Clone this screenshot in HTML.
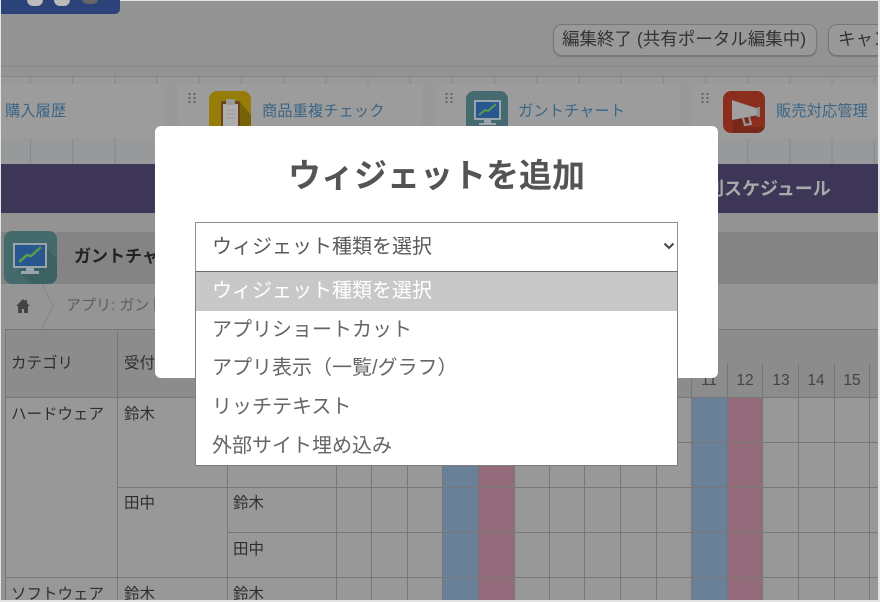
<!DOCTYPE html>
<html lang="ja"><head><meta charset="utf-8"><style>
html,body{margin:0;padding:0}
body{width:880px;height:602px;overflow:hidden;background:#e4e4e4;position:relative;font-family:"Liberation Sans","Noto Sans CJK JP",sans-serif}
div,span{position:absolute;box-sizing:border-box;white-space:nowrap}
#page{left:1px;top:1px;width:877px;height:599px;background:#939393;overflow:hidden}
#bl{filter:blur(.35px);left:0;top:0;width:880px;height:602px;overflow:hidden}
.card{top:84px;height:55px;background:#9c9c9c;border-radius:6px}
.lnk{top:103px;font-size:15.2px;line-height:18px;color:#3a6585;letter-spacing:.15px}
.ic{width:42px;height:42px;border-radius:8px;top:91px;overflow:hidden}
.v{width:1px;background:#777;top:329px;height:271px}
.h{height:1px;background:#777}
.t{font-size:15.5px;line-height:20px;color:#2e2e2e}
.d{font-size:15.5px;line-height:20px;color:#444;width:36px;text-align:center;top:371px}
.grip{width:10px;height:12px;top:92px;background:radial-gradient(circle,#666 1.1px,transparent 1.3px) 0 0/5px 4px}
.opt{left:0;width:481px;height:39px;font-size:20px;line-height:39px;padding-left:16px;color:#666}
</style></head><body>
<div id="page"></div>
<div id="bl">
<!-- header -->
<div style="left:1px;top:0;width:119px;height:14px;background:#2b4378;border-radius:0 0 5px 0;overflow:hidden">
<div style="left:26px;top:-6px;width:16px;height:12px;border-radius:8px;background:#bbb"></div>
<div style="left:53px;top:-6px;width:16px;height:12px;border-radius:8px;background:#bbb"></div>
<div style="left:81px;top:-6px;width:16px;height:10px;border-radius:6px;background:#666"></div>
</div>
<div style="left:1px;top:65px;width:877px;height:2px;background:#8d8d8d"></div>
<div style="left:553px;top:24px;width:264px;height:32px;border:1px solid #777;border-radius:9px;background:#999;font-size:17.5px;line-height:29px;color:#333;padding-left:8px;box-shadow:0 1px 1px #777">編集終了 (共有ポータル編集中)</div>
<div style="left:828px;top:24px;width:50px;height:32px;border:1px solid #777;border-right:none;border-radius:9px 0 0 9px;background:#999;font-size:17.5px;line-height:29px;color:#333;padding-left:9px;overflow:hidden;box-shadow:0 1px 1px #777">キャンセル</div>
<!-- grid background -->
<div style="left:1px;top:76px;width:877px;height:88px;background-color:#97999b;background-image:linear-gradient(90deg,#85898c 1px,transparent 1px);background-size:42.2px 100%;background-position:29px 0;border-top:1px solid #85888b"></div>
<div class="card" style="left:1px;width:164px"></div>
<div class="card" style="left:178px;width:244px"></div>
<div class="card" style="left:435px;width:244px"></div>
<div class="card" style="left:692px;width:186px;border-radius:6px 0 0 6px"></div>
<div class="lnk" style="left:5px">購入履歴</div>
<div class="lnk" style="left:262px">商品重複チェック</div>
<div class="lnk" style="left:518px">ガントチャート</div>
<div class="lnk" style="left:776px;width:98px;overflow:hidden">販売対応管理</div>
<div class="grip" style="left:187px"></div><div class="grip" style="left:444px"></div><div class="grip" style="left:700px"></div>
<div class="ic" style="left:209px;background:#967c08">
<svg width="42" height="42" style="position:absolute;left:0;top:0"><path d="M30 10L42 24V42H14z" fill="#776208"/><rect x="12" y="10" width="19" height="26" rx="2" fill="#6f431a"/><rect x="14" y="13" width="15" height="22" fill="#aeaeae"/><rect x="17" y="8" width="9" height="6" rx="1" fill="#999"/><path d="M17 19h9M17 23h9M17 27h9" stroke="#999"/></svg></div>
<div class="ic" style="left:466px;background:#456a70">
<svg width="42" height="42" style="position:absolute;left:0;top:0"><rect x="8" y="9" width="27" height="20" fill="#9aa5ab"/><rect x="10" y="11" width="23" height="16" fill="#28578f"/><path d="M13 24l6-5 3 1 8-7" stroke="#5d9b4a" stroke-width="2" fill="none"/><rect x="18" y="29" width="7" height="3" fill="#9aa5ab"/><rect x="13" y="32" width="17" height="2" fill="#9aa5ab"/></svg></div>
<div class="ic" style="left:723px;background:#8c2e1e">
<svg width="42" height="42" style="position:absolute;left:0;top:0"><path d="M9 14l26 6v4l-18 12H42V42H10z" fill="#6a2416" opacity=".6"/><path d="M9 9L36 18V24L9 29z" fill="#a0a0a0"/><rect x="34" y="16" width="3" height="10" fill="#8a8a8a"/><path d="M20 27l2 7 6-1-2-7" fill="none" stroke="#999" stroke-width="2"/></svg></div>
<!-- purple -->
<div style="left:1px;top:164px;width:877px;height:49px;background:#3e3657"></div>
<div style="left:718px;top:178px;font-size:18px;line-height:22px;font-weight:bold;color:#a9a9a9;width:115px;overflow:hidden;text-indent:-12px">別スケジュール</div>
<!-- app header -->
<div style="left:1px;top:232px;width:877px;height:52px;background:#848484"></div>
<div style="left:4px;top:231px;width:53px;height:53px;border-radius:8px;background:#456a6c;overflow:hidden">
<svg width="53" height="53" style="position:absolute;left:0;top:0"><path d="M38 12L53 28V53H28L14 40z" fill="#3a5f60" opacity=".8"/><rect x="9" y="12" width="34" height="25" fill="#9aa5ab"/><rect x="11" y="14" width="30" height="21" fill="#28578f"/><path d="M15 31l8-7 4 1 10-9" stroke="#5d9b4a" stroke-width="2.5" fill="none"/><rect x="22" y="37" width="8" height="3" fill="#9aa5ab"/><rect x="17" y="40" width="18" height="3" fill="#9aa5ab"/></svg></div>
<div style="left:74px;top:246px;font-size:17px;line-height:22px;font-weight:bold;color:#222">ガントチャート</div>
<!-- breadcrumb -->
<div style="left:1px;top:284px;width:877px;height:45px;background:#959595"></div>
<svg width="16" height="16" style="position:absolute;left:15px;top:298px"><path d="M8 1L1 8h2v7h4v-4h2v4h4V8h2l-3-3V2h-2v1z" fill="#444"/></svg>
<svg width="14" height="46" style="position:absolute;left:41px;top:284px"><path d="M1 0L12 22 1 45" fill="none" stroke="#858585"/></svg>
<div style="left:66px;top:296px;font-size:15px;line-height:20px;color:#5d5d5d">アプリ: ガントチャート</div>
<!-- table -->
<div style="left:5px;top:329px;width:873px;height:68px;background:#8c8c8c"></div>
<div style="left:5px;top:397px;width:873px;height:203px;background:#989898"></div>
<div style="left:442px;top:397px;width:36px;height:203px;background:#6a8098"></div>
<div style="left:478px;top:397px;width:36px;height:203px;background:#946b7b"></div>
<div style="left:691px;top:397px;width:36px;height:203px;background:#6a8098"></div>
<div style="left:727px;top:397px;width:36px;height:203px;background:#946b7b"></div>
<div class="h" style="left:5px;top:329px;width:873px"></div>
<div class="h" style="left:5px;top:397px;width:873px"></div>
<div class="h" style="left:227px;top:442px;width:651px"></div>
<div class="h" style="left:117px;top:487px;width:761px"></div>
<div class="h" style="left:227px;top:532px;width:651px"></div>
<div class="h" style="left:5px;top:577px;width:873px"></div>
<div class="v" style="left:5px"></div><div class="v" style="left:117px"></div><div class="v" style="left:227px;"></div>
<div class="v" style="left:336px;top:363px;height:237px"></div><div class="v" style="left:371px;top:363px;height:237px"></div><div class="v" style="left:407px;top:363px;height:237px"></div><div class="v" style="left:442px;top:363px;height:237px"></div><div class="v" style="left:478px;top:363px;height:237px"></div><div class="v" style="left:514px;top:363px;height:237px"></div><div class="v" style="left:549px;top:363px;height:237px"></div><div class="v" style="left:584px;top:363px;height:237px"></div><div class="v" style="left:620px;top:363px;height:237px"></div><div class="v" style="left:656px;top:363px;height:237px"></div><div class="v" style="left:691px;top:363px;height:237px"></div><div class="v" style="left:727px;top:363px;height:237px"></div><div class="v" style="left:762px;top:363px;height:237px"></div><div class="v" style="left:798px;top:363px;height:237px"></div><div class="v" style="left:834px;top:363px;height:237px"></div><div class="v" style="left:869px;top:363px;height:237px"></div>
<div class="t" style="left:11px;top:354px">カテゴリ</div>
<div class="t" style="left:124px;top:354px">受付</div>
<div class="d" style="left:691px">11</div><div class="d" style="left:727px">12</div><div class="d" style="left:763px">13</div><div class="d" style="left:798px">14</div><div class="d" style="left:834px">15</div>
<div class="t" style="left:11px;top:405px">ハードウェア</div>
<div class="t" style="left:124px;top:405px">鈴木</div>
<div class="t" style="left:124px;top:494px">田中</div>
<div class="t" style="left:233px;top:494px">鈴木</div>
<div class="t" style="left:233px;top:540px">田中</div>
<div style="left:0;top:585px;width:880px;height:15px;overflow:hidden">
<div class="t" style="left:11px;top:0">ソフトウェア</div><div class="t" style="left:124px;top:0">鈴木</div><div class="t" style="left:233px;top:0">鈴木</div></div>
<div style="left:0;top:600px;width:880px;height:2px;background:#e4e4e4"></div>
<div style="left:878px;top:0;width:2px;height:602px;background:#e4e4e4"></div>
<div style="left:0;top:0;width:1px;height:602px;background:#e4e4e4"></div>
<!-- modal -->
<div style="left:155px;top:126px;width:563px;height:252px;background:#fff;border-radius:6px"></div>
<div style="left:155px;top:155px;width:563px;text-align:center;font-size:33px;line-height:42px;font-weight:bold;color:#545454">ウィジェットを追加</div>
<div style="left:195px;top:222px;width:483px;height:50px;background:#fff;border:1px solid #8f8f8f;border-bottom-color:#6e6e6e;font-size:20px;line-height:48px;padding-left:16px;color:#5a5a5a">ウィジェット種類を選択</div>
<svg width="12" height="8" style="position:absolute;left:663px;top:242px"><path d="M1.5 1.5L6 6l4.5-4.5" fill="none" stroke="#444" stroke-width="2"/></svg>
<div style="left:195px;top:271px;width:483px;height:195px;background:#fff;border:1px solid #7f7f7f;border-top:1px solid #6e6e6e">
<div class="opt" style="top:0;background:#c8c8c8;color:#fff">ウィジェット種類を選択</div>
<div class="opt" style="top:39px">アプリショートカット</div>
<div class="opt" style="top:77px">アプリ表示（一覧/グラフ）</div>
<div class="opt" style="top:116px">リッチテキスト</div>
<div class="opt" style="top:155px">外部サイト埋め込み</div>
</div>
</div>
</body></html>
